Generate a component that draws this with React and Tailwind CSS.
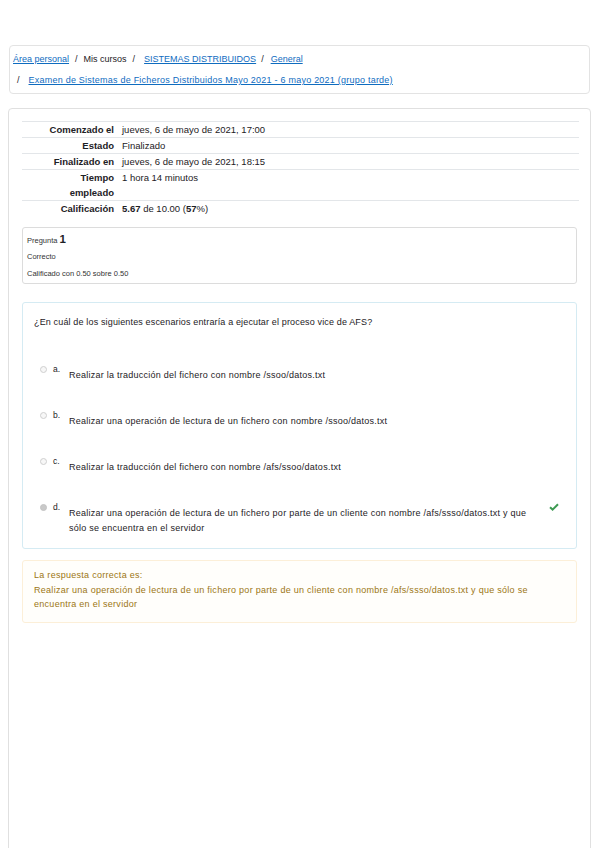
export default function App() {
  const rows = [
    { label: "Comenzado el", value: "jueves, 6 de mayo de 2021, 17:00" },
    { label: "Estado", value: "Finalizado" },
    { label: "Finalizado en", value: "jueves, 6 de mayo de 2021, 18:15" },
    { label: <>Tiempo<br />empleado</>, value: "1 hora 14 minutos" },
    {
      label: "Calificación",
      value: (
        <>
          <span className="font-bold">5.67</span> de 10.00 (<span className="font-bold">57</span>%)
        </>
      ),
    },
  ];
  const options = [
    { l: "a.", t: "Realizar la traducción del fichero con nombre /ssoo/datos.txt" },
    { l: "b.", t: "Realizar una operación de lectura de un fichero con nombre /ssoo/datos.txt" },
    { l: "c.", t: "Realizar la traducción del fichero con nombre /afs/ssoo/datos.txt" },
    {
      l: "d.",
      t: "Realizar una operación de lectura de un fichero por parte de un cliente con nombre /afs/ssso/datos.txt y que sólo se encuentra en el servidor",
      sel: true,
    },
  ];
  return (
    <div className="w-[599px] h-[848px] overflow-hidden bg-white text-[#1d2125] font-['Liberation_Sans',Arial,sans-serif]">
      {/* Breadcrumb */}
      <div className="mt-[45px] ml-[9px] w-[581px] h-[49px] border border-[#e3e3e3] rounded-[4px] pl-[3px] pt-[3px] text-[9px]">
        <div className="flex items-center h-[21px] leading-[21px]">
          <a className="text-[#0f6cbf] underline">Área personal</a>
          <span className="mx-[6px]">/</span>
          <span>Mis cursos</span>
          <span className="mx-[6px] mr-[9px]">/</span>
          <a className="text-[#0f6cbf] underline">SISTEMAS DISTRIBUIDOS</a>
          <span className="mx-[5px] mr-[7px]">/</span>
          <a className="text-[#0f6cbf] underline">General</a>
        </div>
        <div className="flex items-center h-[21px] leading-[21px] pl-[4px]">
          <span className="mr-[9px]">/</span>
          <a className="text-[#0f6cbf] underline tracking-[0.23px]">
            Examen de Sistemas de Ficheros Distribuidos Mayo 2021 - 6 mayo 2021 (grupo tarde)
          </a>
        </div>
      </div>

      {/* Main card */}
      <div className="mt-[14px] ml-[8px] w-[583px] h-[760px] border border-[#e0e0e0] rounded-[4px] pt-[12px] pl-[13px] pr-[11px]">
        {/* Summary table */}
        <div className="text-[9.5px] leading-[15px]">
          {rows.map((r, i) => (
            <div key={i} className="flex border-t border-[#e3e6e9]">
              <div className="w-[92px] text-right font-bold shrink-0">{r.label}</div>
              <div className="pl-[8px]">{r.value}</div>
            </div>
          ))}
        </div>

        {/* Info box */}
        <div className="mt-[11px] w-[555px] h-[57px] border border-[#dcdcdc] rounded-[3px] pl-[4px] pt-[3px] text-[7.5px] text-[#333]">
          <div className="leading-[16px] flex items-baseline">
            <span>Pregunta</span>
            <span className="ml-[2px] text-[11.5px] font-bold text-[#1d2125]">1</span>
          </div>
          <div className="leading-[16px]">Correcto</div>
          <div className="leading-[16px] mt-[1px]">Calificado con 0.50 sobre 0.50</div>
        </div>

        {/* Question box */}
        <div className="mt-[18px] w-[555px] h-[247px] border border-[#d5ebf3] rounded-[3px] pl-[11px] pt-[12px] text-[9px] leading-[15px]">
          <div className="tracking-[0.15px]">¿En cuál de los siguientes escenarios entraría a ejecutar el proceso vice de AFS?</div>
          <div className="mt-[32px] flex flex-col gap-[25px]">
            {options.map((o) => (
              <div key={o.l} className="flex items-start">
                <div
                  className={
                    o.sel
                      ? "mt-[4px] ml-[6px] w-[7px] h-[7px] rounded-full bg-[#c9c9c9] border border-[#c4c4c4] shrink-0"
                      : "mt-[4px] ml-[6px] w-[7px] h-[7px] rounded-full bg-[#f7f7f7] border border-[#cfcfcf] shrink-0"
                  }
                />
                <div className="ml-[6px] w-[16px] shrink-0 text-[8.5px]">{o.l}</div>
                <div className="pt-[6px] w-[470px] text-[9px] tracking-[0.25px] leading-[15px]">{o.t}</div>
                {o.sel && (
                  <svg className="ml-[10px] mt-[3px]" width="10" height="8" viewBox="0 0 10 8">
                    <path d="M1 4.2 L3.6 6.6 L9 1.2" fill="none" stroke="#3d9a52" strokeWidth="2" />
                  </svg>
                )}
              </div>
            ))}
          </div>
        </div>

        {/* Correct answer */}
        <div className="mt-[11px] w-[555px] h-[63px] border border-[#fcefd8] bg-[#fffefb] rounded-[3px] pl-[11px] pt-[7px] text-[9px] tracking-[0.28px] leading-[14.5px] text-[#9c7614]">
          <div>La respuesta correcta es:</div>
          <div className="w-[505px]">
            Realizar una operación de lectura de un fichero por parte de un cliente con nombre /afs/ssso/datos.txt y que sólo se encuentra en el servidor
          </div>
        </div>
      </div>
    </div>
  );
}
